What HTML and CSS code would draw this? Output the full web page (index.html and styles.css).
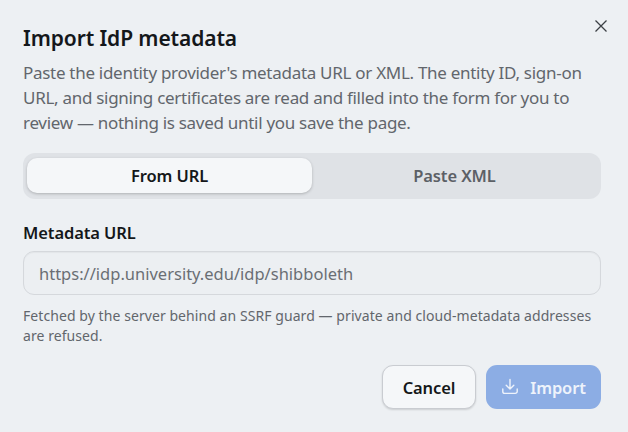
FILE: index.html
```html
<!DOCTYPE html>
<html lang="en">
<head>
<meta charset="utf-8">
<title>Import IdP metadata</title>
<link rel="stylesheet" href="styles.css">
</head>
<body>
<div class="dialog">
  <button class="close" aria-label="Close">
    <svg viewBox="0 0 16 16" width="16" height="16"><path d="M2.5 2.5l11 11M13.5 2.5l-11 11"/></svg>
  </button>
  <h1 class="title">Import IdP metadata</h1>
  <p class="desc">Paste the identity provider's metadata URL or XML. The entity ID, sign-on URL, and signing certificates are read and filled into the form for you to review — nothing is saved until you save the page.</p>
  <div class="tabs">
    <div class="tab active">From URL</div>
    <div class="tab">Paste XML</div>
  </div>
  <label class="label">Metadata URL</label>
  <div class="input">https://idp.university.edu/idp/shibboleth</div>
  <p class="hint">Fetched by the server behind an SSRF guard — private and cloud-metadata addresses are refused.</p>
  <div class="actions">
    <button class="btn cancel">Cancel</button>
    <button class="btn import">
      <svg viewBox="0 0 18 18" width="18" height="18"><path d="M9 1.5v9.5M5.2 7.3L9 11l3.8-3.7M1.8 11v2.4a2 2 0 0 0 2 2h10.4a2 2 0 0 0 2-2V11"/></svg>
      Import
    </button>
  </div>
</div>
</body>
</html>
```
FILE: styles.css
```css
* { box-sizing: border-box; }
html, body { margin: 0; height: 100%; }
body {
  background: #edf0f3;
  font-family: "Noto Sans", "Open Sans", sans-serif;
  color: #5c6066;
}
.dialog {
  position: relative;
  width: 628px;
  height: 432px;
  padding: 24px 27px 23px 23px;
  display: flex;
  flex-direction: column;
}
.close {
  position: absolute;
  top: 18px;
  right: 19px;
  width: 16px;
  height: 16px;
  padding: 0;
  border: 0;
  background: none;
  display: flex;
}
.close svg path { fill: none; stroke: #3c4045; stroke-width: 1.3; }
.title {
  margin: 0;
  font-size: 21px;
  line-height: 28px;
  font-weight: 600;
  letter-spacing: -0.1px;
  color: #14171a;
}
.desc {
  margin: 8px 0 0;
  font-size: 17px;
  line-height: 25px;
  letter-spacing: -0.29px;
  color: #62666c;
}
.tabs {
  margin-top: 18px;
  height: 46px;
  padding: 5px 4px 6px;
  border-radius: 12px;
  background: #dfe2e6;
  display: grid;
  grid-template-columns: 285px 1fr;
}
.tab {
  display: flex;
  align-items: center;
  justify-content: center;
  font-size: 16.5px;
  font-weight: 600;
  letter-spacing: -0.1px;
  color: #5c6066;
}
.tab.active {
  background: #f5f7f9;
  border-radius: 10px;
  color: #14171a;
  box-shadow: 0 1px 3px rgba(0,0,0,.22);
}
.label {
  margin-top: 23px;
  font-size: 16.5px;
  line-height: 22px;
  font-weight: 600;
  letter-spacing: -0.1px;
  color: #14171a;
}
.input {
  margin-top: 7px;
  height: 44px;
  padding: 0 15px;
  border: 1px solid #d5d8dc;
  border-radius: 11px;
  display: flex;
  align-items: center;
  font-size: 16.5px;
  color: #6a6e74;
  background: #eceff2;
  box-shadow: inset 0 1px 1px rgba(0,0,0,.04);
}
.hint {
  margin: 11px 0 0;
  font-size: 14px;
  line-height: 20px;
  letter-spacing: 0.07px;
  color: #62666c;
}
.actions {
  margin-top: auto;
  display: flex;
  justify-content: flex-end;
  gap: 10px;
}
.btn {
  height: 44px;
  border-radius: 11px;
  font-family: inherit;
  font-size: 16.5px;
  font-weight: 600;
  letter-spacing: -0.1px;
  display: flex;
  align-items: center;
  justify-content: center;
}
.cancel {
  width: 94px;
  border: 1px solid #c9ccd1;
  background: #f5f7f9;
  color: #14171a;
  box-shadow: 0 1px 2px rgba(0,0,0,.14);
}
.import {
  width: 115px;
  border: 0;
  background: #8cade4;
  color: #eef3fb;
  gap: 11px;
}
.import svg path { fill: none; stroke: #eef3fb; stroke-width: 1.4; stroke-linecap: round; stroke-linejoin: round; }
```
